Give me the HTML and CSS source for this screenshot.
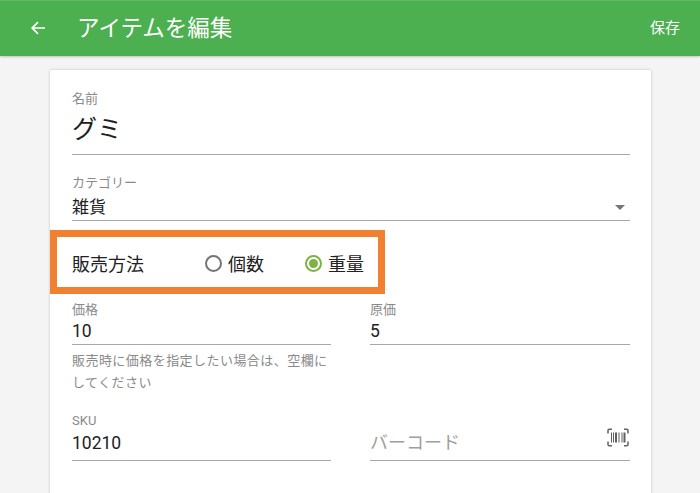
FILE: index.html
```html
<!DOCTYPE html>
<html lang="ja">
<head>
<meta charset="utf-8">
<title>アイテムを編集</title>
<link rel="stylesheet" href="styles.css">
</head>
<body>
<header class="appbar">
  <svg class="back" viewBox="0 0 16 16" width="16" height="16"><path d="M15 8H2.5M8 2.2 2.2 8 8 13.8" fill="none" stroke="#fff" stroke-width="1.7"/></svg>
  <h1 class="title">アイテムを編集</h1>
  <span class="save">保存</span>
</header>
<main class="page">
  <section class="card">
    <div class="field field-name">
      <div class="label">名前</div>
      <div class="value value-large">グミ</div>
    </div>
    <div class="field field-category">
      <div class="label">カテゴリー</div>
      <div class="value">雑貨</div>
      <span class="caret"></span>
    </div>
    <div class="method">
      <span class="method-label">販売方法</span>
      <span class="radio-item radio-first"><span class="radio"></span>個数</span>
      <span class="radio-item radio-second"><span class="radio radio-on"></span>重量</span>
    </div>
    <div class="row row-price">
      <div class="col">
        <div class="field field-short">
          <div class="label">価格</div>
          <div class="value">10</div>
        </div>
        <p class="help">販売時に価格を指定したい場合は、空欄にしてください</p>
      </div>
      <div class="col col-right">
        <div class="field field-short">
          <div class="label">原価</div>
          <div class="value">5</div>
        </div>
      </div>
    </div>
    <div class="row row-sku">
      <div class="col">
        <div class="field field-tall">
          <div class="label">SKU</div>
          <div class="value value-gap">10210</div>
        </div>
      </div>
      <div class="col col-right">
        <div class="field field-tall">
          <div class="placeholder">バーコード</div>
          <svg class="barcode" viewBox="0 0 22 19" width="22" height="19" fill="none" stroke="#616161">
            <path d="M1 5.5V2.5Q1 1.2 2.3 1.2H5M17 1.2H19.7Q21 1.2 21 2.5V5.5M1 13.5V16.5Q1 17.8 2.3 17.8H5M17 17.8H19.7Q21 17.8 21 16.5V13.5" stroke-width="1.5"/>
            <path d="M4.5 4.5v10M6.5 4.5v10M12 4.5v10M15 4.5v10" stroke-width="1"/>
            <path d="M9 4.5v10M17.5 4.5v10" stroke-width="2"/>
          </svg>
        </div>
      </div>
    </div>
  </section>
</main>
</body>
</html>
```
FILE: styles.css
```css
* { box-sizing: border-box; }
html, body { margin: 0; height: 493px; overflow: hidden; }
body {
  background: #f4f4f4;
  font-family: Roboto, "Noto Sans CJK JP", sans-serif;
  color: #212121;
}
.appbar {
  height: 56px;
  background: #4caf50;
  border-top: 1px solid #63b967;
  display: flex;
  align-items: center;
  padding: 0 20px 2px 30px;
  color: #fff;
  box-shadow: 0 1px 2px rgba(0,0,0,.2);
  position: relative;
}
.back { flex: none; }
.title {
  margin: 0 0 0 31px;
  font-size: 22.5px;
  line-height: 28px;
  font-weight: 400;
  flex: 1;
}
.save { font-size: 15px; line-height: 20px; }
.page { padding: 14px 49px 0 50px; }
.card {
  background: #fff;
  height: 440px;
  border-radius: 2px 2px 0 0;
  box-shadow: 0 0 3px rgba(0,0,0,.22);
  padding: 20px 21px 0 0;
}
.field {
  margin-left: 22px;
  border-bottom: 1px solid #a8a8a8;
  position: relative;
}
.label { font-size: 13px; line-height: 18px; color: #8a8a8a; }
.value { font-size: 17.5px; line-height: 24px; color: #212121; }
.value-large { font-size: 25px; line-height: 36px; }
.value-gap { margin-top: 1px; }
.field-name { height: 65px; }
.field-name .value { margin-top: 4px; }
.field-category { height: 47px; margin-top: 19px; }
.field-category .value { margin-top: 3px; font-size: 17px; }
.caret {
  position: absolute;
  right: 5px;
  top: 31px;
  border: 5px solid transparent;
  border-top-color: #757575;
  border-bottom: 0;
}
.method {
  width: 335px;
  height: 64px;
  margin-top: 9px;
  border: 7px solid #f28031;
  display: flex;
  align-items: center;
  padding: 2px 0 0 15px;
  font-size: 18px;
  color: #212121;
}
.method-label { width: 133px; }
.radio-item { display: flex; align-items: center; }
.radio-second { margin-left: 41px; }
.radio {
  width: 17px;
  height: 17px;
  border: 2px solid #757575;
  border-radius: 50%;
  margin-right: 6px;
  position: relative;
}
.radio-on { border-color: #7cb342; }
.radio-on::after {
  content: "";
  position: absolute;
  inset: 2px;
  border-radius: 50%;
  background: #7cb342;
}
.row { display: flex; gap: 39px; margin-left: 22px; }
.col { width: 259px; }
.col-right { width: 260px; }
.row .field { margin-left: 0; }
.field-short { height: 44px; }
.field-tall { height: 49px; }
.row-price { margin-top: 7px; }
.help {
  margin: 5px 0 0;
  font-size: 13px;
  letter-spacing: .45px;
  line-height: 22px;
  color: #8a8a8a;
}
.row-sku { margin-top: 18px; }
.placeholder {
  font-size: 18px;
  line-height: 26px;
  color: #9e9e9e;
  padding-top: 18px;
  height: 44px;
}
.barcode { position: absolute; right: 1px; top: 16px; }
```
